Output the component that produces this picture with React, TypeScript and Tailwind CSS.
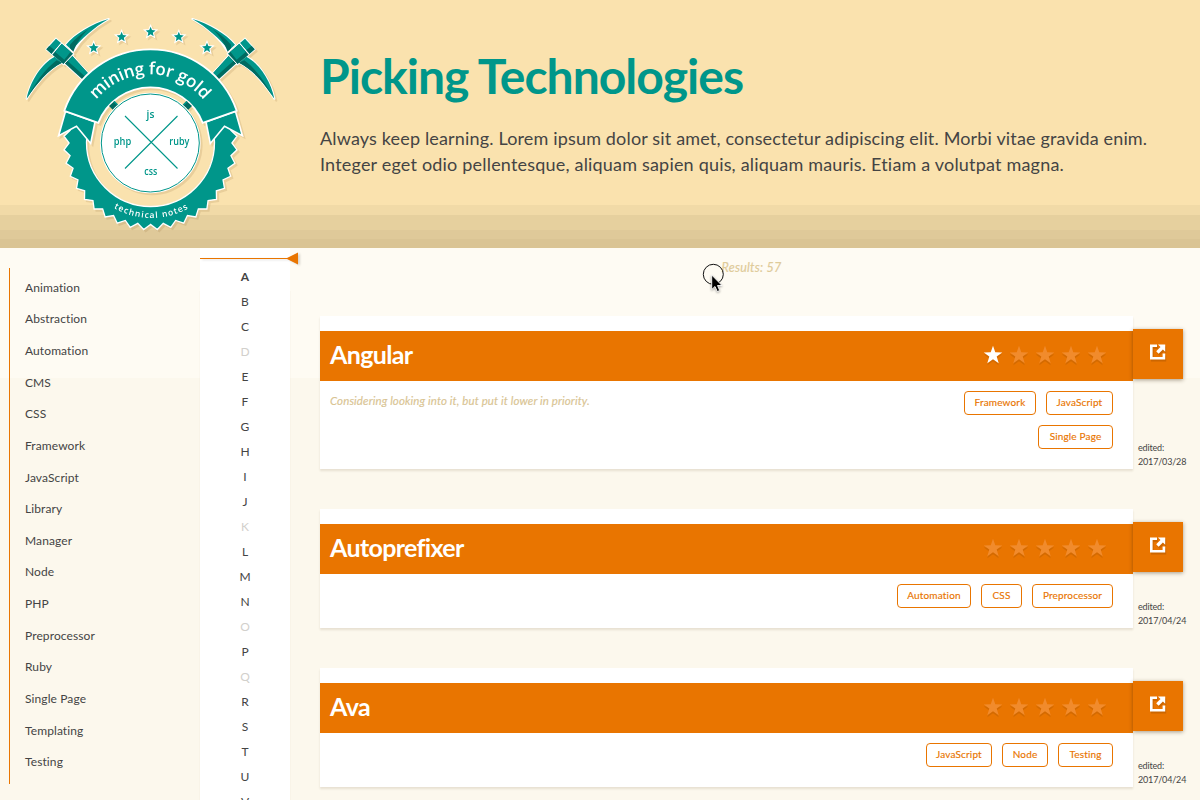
const TEAL = "#00968a";
const DARK = "#006b61";

const categories = [
  "Animation", "Abstraction", "Automation", "CMS", "CSS", "Framework", "JavaScript", "Library",
  "Manager", "Node", "PHP", "Preprocessor", "Ruby", "Single Page", "Templating", "Testing",
];

const letters = "ABCDEFGHIJKLMNOPQRSTUV".split("");
const emptyLetters = ["D", "K", "O", "Q"];

type Tag = { label: string; width: string };
type Tech = { name: string; rating: number; note?: string; edited: string; height: string; tags: Tag[] };

const technologies: Tech[] = [
  {
    name: "Angular",
    rating: 1,
    note: "Considering looking into it, but put it lower in priority.",
    edited: "2017/03/28",
    height: "h-[153px]",
    tags: [
      { label: "Framework", width: "w-[72px]" },
      { label: "JavaScript", width: "w-[67px]" },
      { label: "Single Page", width: "w-[75px]" },
    ],
  },
  {
    name: "Autoprefixer",
    rating: 0,
    edited: "2017/04/24",
    height: "h-[119px]",
    tags: [
      { label: "Automation", width: "w-[74px]" },
      { label: "CSS", width: "w-[41px]" },
      { label: "Preprocessor", width: "w-[81px]" },
    ],
  },
  {
    name: "Ava",
    rating: 0,
    edited: "2017/04/24",
    height: "h-[119px]",
    tags: [
      { label: "JavaScript", width: "w-[66px]" },
      { label: "Node", width: "w-[46px]" },
      { label: "Testing", width: "w-[55px]" },
    ],
  },
];

function starPoints(cx: number, cy: number, r: number, inner = 0.4) {
  return Array.from({ length: 10 }, (_, i) => {
    const a = (Math.PI / 5) * i - Math.PI / 2;
    const q = i % 2 ? r * inner : r;
    return `${(cx + q * Math.cos(a)).toFixed(2)},${(cy + q * Math.sin(a)).toFixed(2)}`;
  }).join(" ");
}

const sealPoints = Array.from({ length: 80 }, (_, i) => {
  const a = (Math.PI / 40) * i + Math.PI / 2;
  const r = i % 2 ? 86.8 : 81.4;
  return `${(150.5 + r * Math.cos(a)).toFixed(2)},${(143 + r * Math.sin(a)).toFixed(2)}`;
}).join("L");

function Pick() {
  return (
    <g transform="translate(20 10) scale(.3333)">
      <g fill="#fff" stroke="#fff" strokeWidth="6" strokeLinejoin="round">
        <path d="M266 27C215 42 165 72 138 104L160 125C182 88 222 52 266 27Z" />
        <path d="M20 266C30 215 65 160 104 140L126 158C85 178 50 220 20 266Z" />
        <path d="M79 118L108 86L160 132L131 163Z" />
        <path d="M134 160L157 138L215 202L200 220Z" />
      </g>
      <path d="M134 160L157 138L215 202L200 220Z" fill={DARK} />
      <path d="M142 152L157 138L215 202L208 211Z" fill={TEAL} />
      <path d="M266 27C215 42 165 72 138 104L156 121C182 88 222 52 266 27Z" fill={TEAL} />
      <path d="M205 58C185 70 168 84 150 104L150 114L160 125C171 97 184 78 205 58Z" fill={DARK} />
      <path d="M20 266C30 215 65 160 104 140L126 158C85 178 50 220 20 266Z" fill={TEAL} />
      <path d="M20 266C45 222 73 178 110 151L126 158C85 178 50 220 20 266Z" fill={DARK} />
      <path d="M79 118L108 86L123 99L95 132Z" fill={TEAL} />
      <path d="M79 118L88 108L105 121L95 132Z" fill={DARK} />
      <path d="M97 134L125 101L160 132L131 163Z" fill={DARK} />
      <path d="M105 125L125 101L152 125L133 149Z" fill={TEAL} />
      <path d="M95 133L124 100M131 163L160 132" stroke="#fff" strokeWidth="3" />
    </g>
  );
}

function Tail() {
  return (
    <path
      d="M65.5 111.5L95 122L90.7 143.5L76.5 126.2L58.6 135.7Z"
      fill={TEAL}
      stroke="#fff"
      strokeWidth="1.6"
    />
  );
}

function Logo() {
  return (
    <svg
      width="300"
      height="248"
      viewBox="0 0 300 248"
      className="shrink-0 font-['Open_Sans',sans-serif] font-semibold [filter:drop-shadow(2px_2px_0_rgba(120,80,20,0.13))]"
    >
      <defs>
        <path id="banner-arc" d="M81.2 143A68.7 68.7 0 0 1 218.6 143" />
        <path id="seal-arc" d="M76 142.5A75.5 75.5 0 0 0 227 142.5" />
      </defs>
      <Pick />
      <g transform="translate(301 0) scale(-1 1)">
        <Pick />
      </g>
      {[[93.7, 48], [121.6, 37], [150.6, 32], [178.8, 37], [207, 48]].map(([x, y]) => (
        <polygon
          key={x}
          points={starPoints(x, y, 5.2, 0.45)}
          fill={TEAL}
          stroke="#fff"
          strokeWidth="2.2"
          className="[paint-order:stroke]"
        />
      ))}
      <path
        fillRule="evenodd"
        d={`M${sealPoints}ZM86.5 142.5a64 64 0 1 0 128 0a64 64 0 1 0 -128 0Z`}
        fill={TEAL}
        stroke="#fff"
        strokeWidth="1.3"
      />
      <Tail />
      <g transform="translate(301 0) scale(-1 1)">
        <Tail />
      </g>
      <path
        d="M64.3 110.8A91.2 91.2 0 0 1 236.7 110.8L202.7 122.8A56.2 56.2 0 0 0 98.3 122.8Z"
        fill={TEAL}
        stroke="#fff"
        strokeWidth="1.8"
      />
      <g fill={DARK}>
        <path d="M109 106L114.5 101L118.5 105L113 110Z" />
        <path d="M192 106L186.5 101L182.5 105L188 110Z" />
        <path d="M113.5 102L114.5 101L118.5 105L117.5 106ZM187.5 102L186.5 101L182.5 105L183.5 106Z" fill={TEAL} />
      </g>
      <circle cx="150.3" cy="143" r="50.3" fill="#fff" />
      <circle cx="150.3" cy="143" r="49" fill="#fff" stroke={TEAL} strokeWidth="1" />
      <path d="M125 116L177.5 168.5M177.5 116L125 168.5" stroke={TEAL} strokeWidth="1.1" />
      <g fill={TEAL} fontSize="10.2" fontWeight="600" textAnchor="middle">
        <text x="150.5" y="118">js</text>
        <text x="122.5" y="145.3" textLength="17.5" lengthAdjust="spacingAndGlyphs">php</text>
        <text x="179.3" y="145.3" textLength="20" lengthAdjust="spacingAndGlyphs">ruby</text>
        <text x="150.8" y="175.3" textLength="13" lengthAdjust="spacingAndGlyphs">css</text>
      </g>
      <g fill="#fff" textAnchor="middle">
        <text fontSize="17" fontWeight="600" letterSpacing="-0.15">
          <textPath href="#banner-arc" startOffset="50%">mining for gold</textPath>
        </text>
        <text fontSize="8.5" letterSpacing="1.1">
          <textPath href="#seal-arc" startOffset="50%">technical notes</textPath>
        </text>
      </g>
    </svg>
  );
}

function Rating({ value }: { value: number }) {
  return (
    <div className="flex gap-2 pb-0.5">
      {[1, 2, 3, 4, 5].map((n) => (
        <svg
          key={n}
          width="18"
          height="18"
          viewBox="0 0 18 18"
          className="overflow-visible [filter:drop-shadow(0_2px_0_rgba(0,0,0,0.09))]"
        >
          <polygon points={starPoints(9, 9.4, 9.7)} fill={n <= value ? "#fff" : "#f18b2c"} />
        </svg>
      ))}
    </div>
  );
}

function OpenIcon() {
  return (
    <svg
      width="16"
      height="16"
      viewBox="0 0 16 16"
      fill="#fff"
      className="overflow-visible [filter:drop-shadow(1px_2px_0_rgba(0,0,0,0.12))]"
    >
      <path d="M0 0.5H7V3H2.6V12.9H12.6V9.5H15.2V15.5H0Z" />
      <path d="M8 0.5H15.2V7.7L12.9 5.4L8.6 9.7L6.2 7.3L10.5 3Z" />
    </svg>
  );
}

function Card({ tech }: { tech: Tech }) {
  return (
    <article className="flex">
      <div className={`w-[813px] bg-white pt-[15px] shadow-[0_2px_2px_rgba(90,70,30,0.13)] ${tech.height}`}>
        <div className="flex h-[50px] items-center justify-between bg-[#e97500] pr-[27px] pl-[10px]">
          <h2 className="pb-0.5 font-[Lato,sans-serif] text-[25px] font-bold tracking-[-0.65px] text-white">{tech.name}</h2>
          <Rating value={tech.rating} />
        </div>
        <div className="flex items-start justify-between pt-[10px] pr-5 pl-[10px]">
          <p className="text-[11.5px] leading-[19px] tracking-[0.11px] text-[#d9c493] italic [-webkit-text-stroke:0.15px]">
            {tech.note}
          </p>
          <div className="flex w-[220px] flex-wrap justify-end gap-[10px]">
            {tech.tags.map((tag) => (
              <span
                key={tag.label}
                className={`flex h-6 items-center justify-center rounded-[4px] border border-[#e97500] pb-px text-[10px] tracking-[0.16px] whitespace-nowrap text-[#e97500] [-webkit-text-stroke:0.15px] ${tag.width}`}
              >
                {tag.label}
              </span>
            ))}
          </div>
        </div>
      </div>
      <div className="flex w-[67px] flex-col justify-between pt-[13px]">
        <button className="flex size-[50px] items-center justify-center bg-[#e97500] pr-px pb-[4px] shadow-[0_1px_4px_rgba(60,40,10,0.45)]">
          <OpenIcon />
        </button>
        <p className="pl-[5px] text-[9px] leading-[14px] tracking-[-0.17px] text-[#444]">
          edited:
          <br />
          {tech.edited}
        </p>
      </div>
    </article>
  );
}

export default function App() {
  return (
    <div className="relative flex h-[800px] w-[1200px] flex-col overflow-hidden font-[Lato,sans-serif] text-[#444]">
      <header className="flex h-[248px] shrink-0 bg-[linear-gradient(#fae2ae_205px,#f1daa7_205px,#f1daa7_215px,#e6d09e_215px,#e6d09e_230px,#dfc999_230px,#dfc999_239px,#dac494_239px)]">
        <Logo />
        <div className="pt-[44px] pl-5">
          <h1 className="text-[48px] leading-[64px] font-bold tracking-[-0.97px] text-[#00968a]">Picking Technologies</h1>
          <p className="mt-[17px] text-[18px] leading-[26px] tracking-[0.16px] whitespace-nowrap">
            Always keep learning. Lorem ipsum dolor sit amet, consectetur adipiscing elit. Morbi vitae gravida enim.
            <br />
            <span className="tracking-[0.19px]">
              Integer eget odio pellentesque, aliquam sapien quis, aliquam mauris. Etiam a volutpat magna.
            </span>
          </p>
        </div>
      </header>

      <div className="flex min-h-0 flex-1 bg-[linear-gradient(#fefbf3_130px,#fcf8ed_130px)]">
        <nav className="w-[200px] shrink-0 pt-5 pl-[9px]">
          <ul className="h-[516px] border-l border-[#e97500] pt-[4px] pl-[15px] text-[12px] tracking-[0.1px]">
            {categories.map((c) => (
              <li key={c} className="flex h-[31.63px] items-center">{c}</li>
            ))}
          </ul>
        </nav>

        <nav className="relative w-[90px] shrink-0 bg-white shadow-[0_43px_1px_rgba(120,90,40,0.12)]">
          <svg width="100" height="14" viewBox="0 0 100 14" className="absolute top-1 left-0 [filter:drop-shadow(2px_1px_1px_rgba(0,0,0,0.15))]">
            <path d="M0 6.5H88" stroke="#e97500" />
            <path d="M86 6.5L98 0.5V12.5Z" fill="#e97500" />
          </svg>
          <ul className="pt-4 text-center text-[12px]">
            {letters.map((l) => (
              <li
                key={l}
                className={`h-[25px] leading-[25px] ${l === "A" ? "font-bold" : ""} ${emptyLetters.includes(l) ? "text-[#d2d0cc]" : ""}`}
              >
                {l}
              </li>
            ))}
          </ul>
        </nav>

        <main className="w-[910px] shrink-0 pl-[30px]">
          <p className="h-[68px] pt-[10px] pl-[401.5px] text-[12.5px] leading-[19px] tracking-[0.25px] text-[#dfcb9a] italic [-webkit-text-stroke:0.2px]">
            Results: 57
          </p>
          <div className="flex flex-col gap-10">
            {technologies.map((t) => (
              <Card key={t.name} tech={t} />
            ))}
          </div>
        </main>
      </div>

      <svg width="30" height="34" viewBox="0 0 30 34" className="absolute top-[262px] left-[700px]">
        <circle cx="13.3" cy="12.3" r="10" fill="none" stroke="#111" strokeWidth="1" />
        <path
          d="M11.7 13V27.5L15 24.5L17.3 29.6L19.7 28.5L17.5 23.5H22Z"
          fill="#000"
          stroke="#fff"
          strokeWidth="0.9"
          className="[filter:drop-shadow(0_1px_1px_rgba(0,0,0,0.35))]"
        />
      </svg>
    </div>
  );
}
